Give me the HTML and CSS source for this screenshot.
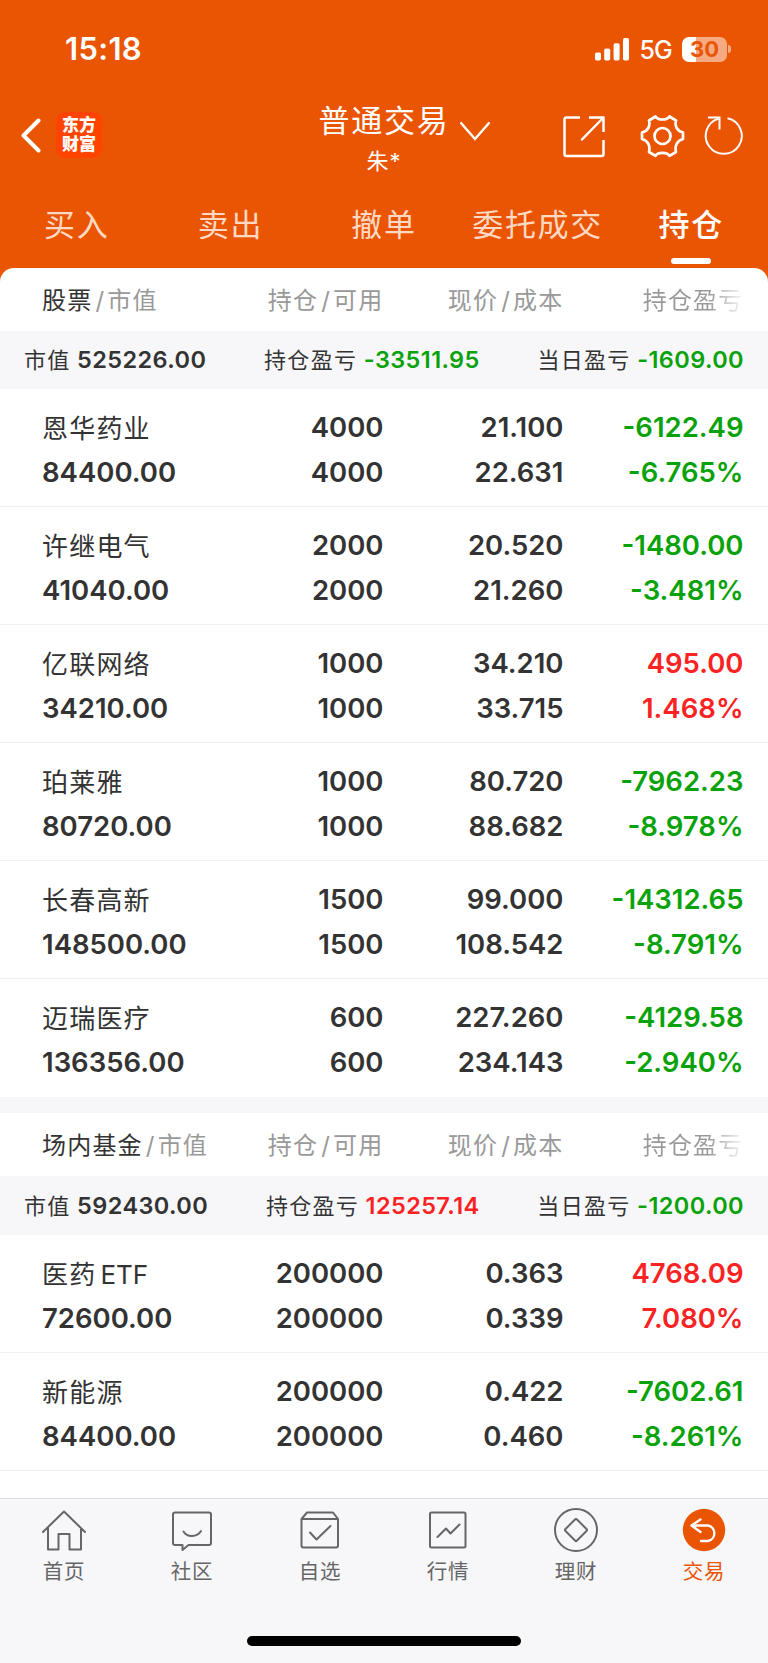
FILE: index.html
```html
<!DOCTYPE html>
<html lang="zh-CN">
<head>
  <meta charset="UTF-8">
  <meta name="viewport" content="width=device-width, initial-scale=1.0">
  <title>持仓</title>
  <link rel="stylesheet" href="styles.css">
</head>
<body>
<header>
  <div class="status-bar">
    <span class="time">15:18</span>
    <div class="status-icons">
      <svg class="signal" width="34" height="23" viewBox="0 0 34 23" fill="#fff">
        <rect x="0" y="14.5" width="6" height="8" rx="1.7"/>
        <rect x="9.2" y="10.5" width="6" height="12" rx="1.7"/>
        <rect x="18.6" y="5.2" width="6" height="17.3" rx="1.7"/>
        <rect x="28" y="0" width="6" height="22.5" rx="1.7"/>
      </svg>
      <span class="network">5G</span>
      <div class="battery"><span>30</span></div>
      <div class="battery-tip"></div>
    </div>
  </div>

  <div class="nav-bar">
    <svg class="back" width="20" height="36" viewBox="0 0 20 36" fill="none" stroke="#fff" stroke-width="4" stroke-linecap="round" stroke-linejoin="round">
      <path d="M17.5 2.5 L2.5 17.5 L17.5 32.5"/>
    </svg>
    <div class="logo"><span>东方</span><span>财富</span></div>
    <div class="account">
      <h1>普通交易</h1>
      <p>朱*</p>
    </div>
    <svg class="chevron" width="30" height="20" viewBox="0 0 30 20" fill="none" stroke="#fff" stroke-width="2.4" stroke-linecap="round">
      <path d="M1.2 1.2 L15 17 L28.8 1.2"/>
    </svg>
    <svg class="share" width="42" height="42" viewBox="0 0 42 42" fill="none" stroke="#fff" stroke-width="2.5" stroke-linecap="butt" stroke-linejoin="round">
      <path d="M17 1.5 H3.5 Q1.5 1.5 1.5 3.5 V38 Q1.5 40 3.5 40 H38.5 Q40.5 40 40.5 38 V24"/>
      <path d="M26 1.5 H40.5 V16"/>
      <path d="M40 2 L19 23.5" stroke-linecap="round"/>
    </svg>
    <svg class="gear" width="45" height="44" viewBox="0 0 45 44" fill="none" stroke="#fff" stroke-width="2.7" stroke-linejoin="round">
      <path d="M9 5.5 L15.5 1.5 C18 5.5 27 5.5 29.5 1.500 L36 5.5 C34.5 11 37 16 43 17.5 V24 C37 25.500 34.500 31 36 37 L29.5 40.800 C27 37 18 37 15.5 40.800 L9 37 C10.500 31 8 25.500 2 24 V17.5 C8 16 10.500 11 9 5.5 Z"/>
      <circle cx="22.5" cy="21" r="8"/>
    </svg>
    <svg class="refresh" width="40" height="40" viewBox="0 0 40 40" fill="none" stroke="#fff" stroke-width="2">
      <path d="M23.5 2.2 A18 18 0 1 1 14.5 2.6"/>
      <path d="M4 1.5 H15.5 V13.5"/>
    </svg>
  </div>

  <nav class="tabs">
    <a>买入</a>
    <a>卖出</a>
    <a>撤单</a>
    <a>委托成交</a>
    <a class="active">持仓</a>
  </nav>
</header>

<main>
  <section class="group">
    <div class="columns">
      <span><b>股票</b><i>/</i>市值</span>
      <span>持仓<i>/</i>可用</span>
      <span>现价<i>/</i>成本</span>
      <span class="faded">持仓盈亏</span>
    </div>
    <div class="summary">
      <p>市值 <b>525226.00</b></p>
      <p>持仓盈亏 <b class="down">-33511.95</b></p>
      <p>当日盈亏 <b class="down">-1609.00</b></p>
    </div>
    <div class="row">
      <div><h3>恩华药业</h3><p>84400.00</p></div>
      <div><p>4000</p><p>4000</p></div>
      <div><p>21.100</p><p>22.631</p></div>
      <div class="down"><p>-6122.49</p><p>-6.765%</p></div>
    </div>
    <div class="row">
      <div><h3>许继电气</h3><p>41040.00</p></div>
      <div><p>2000</p><p>2000</p></div>
      <div><p>20.520</p><p>21.260</p></div>
      <div class="down"><p>-1480.00</p><p>-3.481%</p></div>
    </div>
    <div class="row">
      <div><h3>亿联网络</h3><p>34210.00</p></div>
      <div><p>1000</p><p>1000</p></div>
      <div><p>34.210</p><p>33.715</p></div>
      <div class="up"><p>495.00</p><p>1.468%</p></div>
    </div>
    <div class="row">
      <div><h3>珀莱雅</h3><p>80720.00</p></div>
      <div><p>1000</p><p>1000</p></div>
      <div><p>80.720</p><p>88.682</p></div>
      <div class="down"><p>-7962.23</p><p>-8.978%</p></div>
    </div>
    <div class="row">
      <div><h3>长春高新</h3><p>148500.00</p></div>
      <div><p>1500</p><p>1500</p></div>
      <div><p>99.000</p><p>108.542</p></div>
      <div class="down"><p>-14312.65</p><p>-8.791%</p></div>
    </div>
    <div class="row">
      <div><h3>迈瑞医疗</h3><p>136356.00</p></div>
      <div><p>600</p><p>600</p></div>
      <div><p>227.260</p><p>234.143</p></div>
      <div class="down"><p>-4129.58</p><p>-2.940%</p></div>
    </div>
  </section>

  <section class="group">
    <div class="columns">
      <span><b>场内基金</b><i>/</i>市值</span>
      <span>持仓<i>/</i>可用</span>
      <span>现价<i>/</i>成本</span>
      <span class="faded">持仓盈亏</span>
    </div>
    <div class="summary">
      <p>市值 <b>592430.00</b></p>
      <p>持仓盈亏 <b class="up">125257.14</b></p>
      <p>当日盈亏 <b class="down">-1200.00</b></p>
    </div>
    <div class="row">
      <div><h3>医药<em>ETF</em></h3><p>72600.00</p></div>
      <div><p>200000</p><p>200000</p></div>
      <div><p>0.363</p><p>0.339</p></div>
      <div class="up"><p>4768.09</p><p>7.080%</p></div>
    </div>
    <div class="row">
      <div><h3>新能源</h3><p>84400.00</p></div>
      <div><p>200000</p><p>200000</p></div>
      <div><p>0.422</p><p>0.460</p></div>
      <div class="down"><p>-7602.61</p><p>-8.261%</p></div>
    </div>
  </section>
</main>

<footer>
  <div class="menu">
    <a>
      <svg width="46" height="46" viewBox="0 0 46 46">
        <path d="M2 25 L23 4.5 L44 25 M7 21 V42.5 H17.5 V27 H28.5 V42.5 H40 V21"/>
      </svg>
      <span>首页</span>
    </a>
    <a>
      <svg width="46" height="46" viewBox="0 0 46 46">
        <path d="M6 5.5 H40 Q42 5.5 42 7.5 V36 Q42 38 40 38 H19.5 L13.5 43 V38 H6 Q4 38 4 36 V7.5 Q4 5.5 6 5.5 Z"/>
        <path d="M14.5 24.5 C18 30.5 28 30.5 32 24"/>
      </svg>
      <span>社区</span>
    </a>
    <a>
      <svg width="46" height="46" viewBox="0 0 46 46">
        <path d="M4.5 12 L10 5.5 H36 L41 12 V38.5 Q41 40.5 39 40.5 H6.5 Q4.5 40.5 4.5 38.5 Z M4.5 12 H41"/>
        <path d="M13 25.5 L19.5 32.5 L33.5 19"/>
      </svg>
      <span>自选</span>
    </a>
    <a>
      <svg width="46" height="46" viewBox="0 0 46 46">
        <rect x="5" y="5.5" width="35.5" height="35" rx="1.5"/>
        <path d="M12.5 30 L21 21.5 L25.5 26.5 L34.5 17.5"/>
      </svg>
      <span>行情</span>
    </a>
    <a>
      <svg width="46" height="46" viewBox="0 0 46 46">
        <circle cx="23" cy="23" r="21"/>
        <path d="M22 12.5 Q23 11.5 24 12.5 L33.5 22 Q34.5 23 33.5 24 L24 33.5 Q23 34.5 22 33.5 L12.5 24 Q11.5 23 12.5 22 Z"/>
      </svg>
      <span>理财</span>
    </a>
    <a class="active">
      <svg width="46" height="46" viewBox="0 0 46 46">
        <circle class="disc" cx="23" cy="23" r="21.2"/>
        <path d="M19.5 12.5 L10.5 18.5 L19.5 25 M11 18.5 H27 A7.9 7.9 0 0 1 27 34 H20"/>
      </svg>
      <span>交易</span>
    </a>
  </div>
  <div class="home-bar"></div>
</footer>
</body>
</html>
```

FILE: styles.css
```css
/* Reset */
* {
  margin: 0;
  padding: 0;
  box-sizing: border-box;
}

body {
  width: 768px;
  height: 1663px;
  display: flex;
  flex-direction: column;
  overflow: hidden;
  font-family: Inter, "Noto Sans CJK SC", sans-serif;
  color: #333;
  background: #ea5504;
}

i, em {
  font-style: normal;
}

header {
  height: 268px;
  flex-shrink: 0;
  color: #fff;
}

/* Status bar */
.status-bar {
  height: 98px;
  display: flex;
  justify-content: space-between;
  padding: 0 37px 0 65px;
}

.time {
  font-size: 31px;
  font-weight: 600;
  letter-spacing: 0.3px;
  line-height: 98px;
}

.status-icons {
  display: flex;
  align-items: center;
}

.network {
  margin: 2px 10px 0 10px;
  font-size: 25px;
  font-weight: 500;
  letter-spacing: -0.8px;
}

.battery {
  width: 45px;
  height: 25px;
  border-radius: 7px;
  text-align: center;
  font-size: 22px;
  font-weight: 700;
  line-height: 25px;
  color: #ea5504;
  background: linear-gradient(90deg, #fff 14px, #f6aa82 14px);
}

.battery-tip {
  width: 3px;
  height: 8px;
  margin-left: 1px;
  border-radius: 0 4px 4px 0;
  background: #f6aa82;
}

/* Nav bar */
.nav-bar {
  height: 92px;
  display: flex;
  align-items: flex-start;
  padding-left: 21px;
}

.back {
  margin-top: 20px;
}

.logo {
  width: 46px;
  height: 46px;
  margin: 14px 0 0 15px;
  display: flex;
  flex-direction: column;
  align-items: center;
  justify-content: center;
  border-radius: 9px;
  background: #ff4402;
  font-size: 17px;
  font-weight: 900;
  line-height: 19px;
}

.account {
  width: 132px;
  margin-left: 216px;
  text-align: center;
}

.account h1 {
  font-size: 31px;
  font-weight: 400;
  letter-spacing: 1.7px;
  line-height: 45px;
  white-space: nowrap;
}

.account p {
  font-size: 22px;
  line-height: 36px;
  letter-spacing: 1px;
}

.chevron {
  margin: 24px 0 0 10px;
}

.share {
  margin: 18px 0 0 73px;
}

.gear {
  margin: 17px 0 0 35px;
}

.refresh {
  margin: 18px 0 0 19px;
}

/* Tabs */
.tabs {
  height: 78px;
  display: grid;
  grid-template-columns: repeat(5, 1fr);
}

.tabs a {
  display: flex;
  flex-direction: column;
  align-items: center;
  padding-top: 1px;
  font-size: 31px;
  letter-spacing: 1.7px;
  line-height: 67px;
  color: #ffd9c4;
}

.tabs .active {
  font-weight: 500;
  color: #fff;
}

.tabs .active::after {
  content: "";
  width: 40px;
  height: 6px;
  border-radius: 3px;
  background: #fff;
}

/* Holdings */
main {
  flex: 1;
  min-height: 0;
  overflow: hidden;
  border-radius: 14px 14px 0 0;
  background: #fff;
}

.group + .group {
  border-top: 16px solid #f7f7fa;
}

.columns, .row {
  display: grid;
  grid-template-columns: 188px 153.5px 180px 180px;
  padding-left: 42px;
  text-align: right;
}

.columns > :first-child, .row > :first-child {
  text-align: left;
}

.columns {
  height: 63px;
  font-size: 24px;
  font-weight: 400;
  letter-spacing: 1.2px;
  line-height: 65px;
  color: #999;
  white-space: nowrap;
}

.columns b {
  font-weight: 400;
  color: #333;
}

.columns i {
  margin: 0 2px 0 3px;
}

.columns .faded {
  color: transparent;
  background: linear-gradient(90deg, #999 80%, #fff 101%);
  background-clip: text;
  -webkit-background-clip: text;
}

.summary {
  height: 58px;
  display: flex;
  justify-content: space-between;
  padding: 0 24px;
  font-size: 22px;
  letter-spacing: 1.3px;
  line-height: 58px;
  background: #f7f7fa;
}

.summary b {
  margin-left: -1px;
  font-size: 23.5px;
  font-weight: 600;
  letter-spacing: 0.4px;
}

.group + .group .summary {
  height: 59px;
  line-height: 60px;
}

.row {
  height: 118px;
  padding-top: 16px;
  border-bottom: 1px solid #f1f1f3;
  font-size: 27.5px;
  font-weight: 600;
  line-height: 44.6px;
}

.group:first-child .row:last-child {
  border-bottom: none;
}

.row h3 {
  height: 44.6px;
  padding-top: 1.5px;
  font-size: 26px;
  font-weight: 400;
  letter-spacing: 1.2px;
  line-height: inherit;
}

.row em {
  margin-left: 4px;
  letter-spacing: 0;
}

.up {
  color: #fa2323;
}

.down {
  color: #0aa20a;
}

/* Bottom menu */
footer {
  height: 165px;
  flex-shrink: 0;
  border-top: 1px solid #dedee2;
  background: #f7f7fa;
}

.menu {
  height: 137px;
  display: grid;
  grid-template-columns: repeat(6, 1fr);
}

.menu a {
  display: flex;
  flex-direction: column;
  align-items: center;
  padding-top: 8px;
  font-size: 20.5px;
  letter-spacing: 0.8px;
  line-height: 38px;
  color: #666;
}

.menu svg {
  fill: none;
  stroke: #666;
  stroke-width: 2;
  stroke-linecap: round;
  stroke-linejoin: round;
}

.menu .active {
  color: #ea5504;
}

.menu .active svg {
  stroke: #fff;
  stroke-width: 2.4;
}

.menu .disc {
  fill: #ea5504;
  stroke: none;
}

.home-bar {
  width: 274px;
  height: 10px;
  margin: 0 auto;
  border-radius: 5px;
  background: #000;
}
```
